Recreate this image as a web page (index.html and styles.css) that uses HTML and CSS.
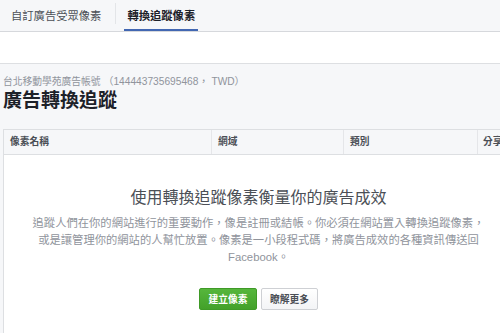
FILE: index.html
```html
<!DOCTYPE html>
<html lang="zh-Hant">
<head>
<meta charset="utf-8">
<link rel="stylesheet" href="styles.css">
</head>
<body>
<nav class="tabs">
  <div class="tab">自訂廣告受眾像素</div>
  <div class="sep"></div>
  <div class="tab active">轉換追蹤像素</div>
</nav>
<div class="band"></div>
<main class="main">
  <div class="account">台北移動學苑廣告帳號 <span class="acct-id">（144443735695468， TWD）</span></div>
  <h1 class="title">廣告轉換追蹤</h1>
  <section class="table">
    <div class="thead">
      <div class="th">像素名稱</div>
      <div class="th">網域</div>
      <div class="th">類別</div>
      <div class="th">分享</div>
    </div>
    <div class="empty">
      <h2 class="empty-title">使用轉換追蹤像素衡量你的廣告成效</h2>
      <p class="empty-text">追蹤人們在你的網站進行的重要動作，像是註冊或結帳。你必須在網站置入轉換追蹤像素，<br>或是讓管理你的網站的人幫忙放置。像素是一小段程式碼，將廣告成效的各種資訊傳送回<br>Facebook。</p>
      <div class="actions">
        <button class="btn primary">建立像素</button>
        <button class="btn">瞭解更多</button>
      </div>
    </div>
  </section>
</main>
</body>
</html>
```
FILE: styles.css
```css
html, body {
  margin: 0;
  padding: 0;
  overflow: hidden;
}
body {
  background: #f6f7f9;
  font-family: "Liberation Sans", "Noto Sans CJK TC", sans-serif;
  color: #1d2129;
  width: 500px;
  height: 333px;
}
.tabs {
  display: flex;
  box-sizing: border-box;
  height: 32px;
  padding-left: 8px;
  border-bottom: 1px solid #d6d8dc;
}
.tab {
  height: 31px;
  box-sizing: border-box;
  padding: 0 3px 1px;
  display: flex;
  align-items: center;
  font-size: 11.3px;
  color: #4b4f56;
}
.tab.active {
  font-weight: bold;
  color: #1d2129;
  border-bottom: 2px solid #4267b2;
  padding-bottom: 0;
}
.sep {
  width: 1px;
  height: 21px;
  margin: 3px 8px 0 11px;
  background: #e3e5e8;
}
.band {
  height: 31px;
  background: #fff;
  border-bottom: 1px solid #dddfe2;
}
.main {
  padding: 12px 0 0 3px;
}
.account {
  font-size: 9.75px;
  line-height: 12px;
  color: #90949c;
}
.acct-id {
  font-size: 10.2px;
}
.title {
  margin: 2px 0 0;
  font-size: 19px;
  line-height: 22px;
  font-weight: bold;
  color: #1d2129;
}
.table {
  margin-top: 17px;
  width: 509px;
  border: 1px solid #dddfe2;
  background: #fff;
}
.thead {
  display: grid;
  grid-template-columns: 208px 132px 134px 1fr;
  height: 25px;
  box-sizing: border-box;
  background: #f6f7f9;
  border-bottom: 1px solid #dddfe2;
}
.th {
  border-right: 1px solid #e5e6e9;
  padding-left: 6px;
  font-size: 9.75px;
  line-height: 24px;
  font-weight: bold;
  color: #4b4f56;
}
.th:last-child {
  border-right: 0;
  padding-left: 5px;
}
.empty {
  text-align: center;
  padding-top: 33px;
  height: 200px;
}
.empty-title {
  margin: 0;
  font-size: 16px;
  line-height: 20px;
  font-weight: normal;
  color: #4b4f56;
}
.empty-text {
  margin: 7px 0 0;
  font-size: 11.3px;
  line-height: 17px;
  color: #90949c;
}
.actions {
  margin-top: 22px;
  display: flex;
  justify-content: center;
  gap: 4px;
}
.btn {
  height: 22px;
  box-sizing: border-box;
  padding: 0 8px;
  font-family: inherit;
  font-size: 9.75px;
  font-weight: bold;
  color: #4b4f56;
  background: linear-gradient(#fff, #f3f4f6);
  border: 1px solid #ced0d4;
  border-radius: 2px;
  width: 57px;
}
.btn.primary {
  color: #fff;
  background: linear-gradient(#56b63c, #43a12a);
  border-color: #3f9a27;
  width: 58px;
}
```
